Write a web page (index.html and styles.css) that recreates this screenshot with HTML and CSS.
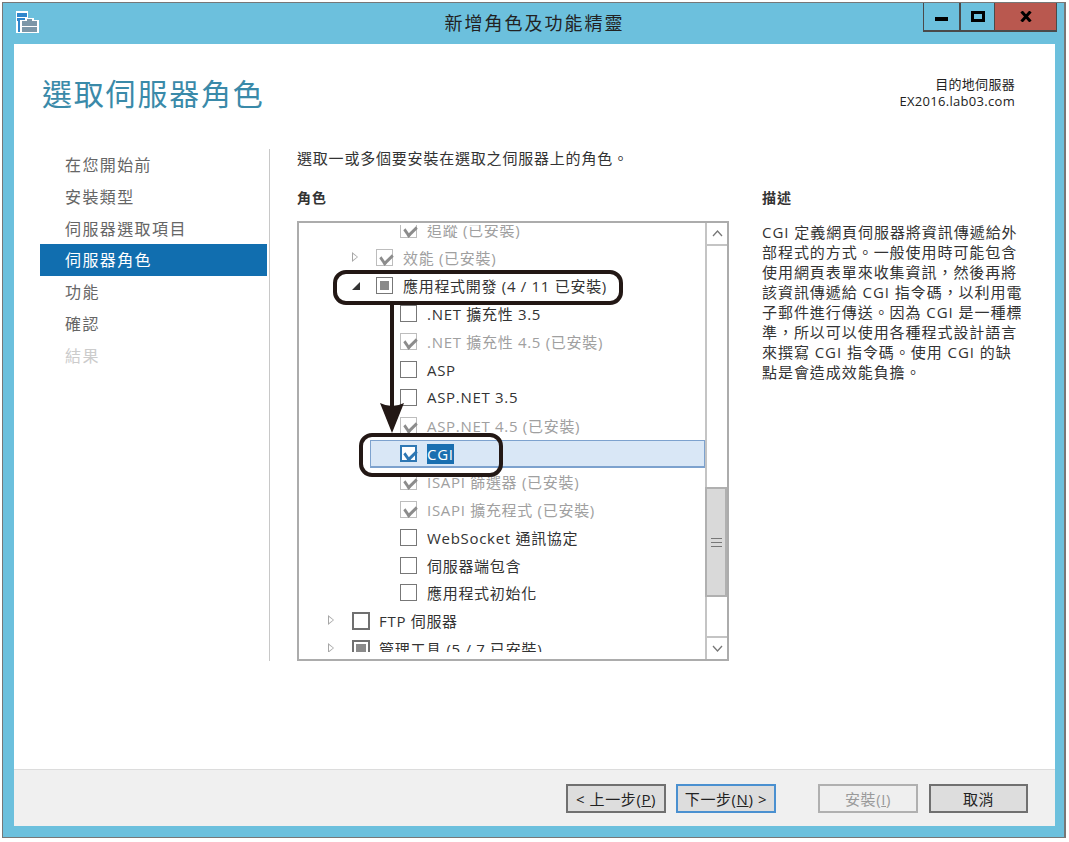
FILE: index.html
```html
<!DOCTYPE html>
<html lang="zh-Hant">
<head>
    <meta charset="UTF-8">
    <title>新增角色及功能精靈</title>
    <link rel="stylesheet" href="styles.css">
</head>
<body>

<div class="window">
    <header class="titlebar">
        <svg class="app-icon" width="23" height="22" viewBox="0 0 23 22">
            <rect x="0" y="0" width="12" height="22" fill="#fff"/>
            <rect x="1" y="2" width="10" height="4" fill="#2f86cc"/>
            <rect x="1" y="7" width="10" height="3" fill="#2f86cc"/>
            <rect x="2" y="10" width="2" height="11" fill="#2f86cc"/>
            <rect x="4" y="9" width="19" height="13" fill="#fff"/>
            <rect x="9" y="7" width="9" height="3" fill="#fff"/>
            <rect x="11" y="8" width="5" height="2" fill="#7d97a8"/>
            <rect x="6" y="10" width="15" height="11" fill="#7d97a8"/>
            <rect x="6" y="15" width="15" height="1" fill="#fff"/>
        </svg>
        <h1 class="window-title">新增角色及功能精靈</h1>
        <div class="controls">
            <button class="ctl ctl-min"><span class="min-glyph"></span></button>
            <button class="ctl ctl-max"><span class="max-glyph"></span></button>
            <button class="ctl ctl-close">
                <svg width="12" height="11" viewBox="0 0 12 11"><path d="M1.5 0.5l9 10M10.5 0.5l-9 10" stroke="#000" stroke-width="3" fill="none"/></svg>
            </button>
        </div>
    </header>

    <div class="page">
        <div class="page-head">
            <h2 class="page-title">選取伺服器角色</h2>
            <div class="target">
                <div>目的地伺服器</div>
                <div>EX2016.lab03.com</div>
            </div>
        </div>

        <div class="page-body">
            <nav class="steps">
                <a>在您開始前</a>
                <a>安裝類型</a>
                <a>伺服器選取項目</a>
                <a class="current">伺服器角色</a>
                <a>功能</a>
                <a>確認</a>
                <a class="off">結果</a>
            </nav>

            <section class="roles">
                <p class="intro">選取一或多個要安裝在選取之伺服器上的角色。</p>
                <h3 class="col-head">角色</h3>
                <div class="listbox">
                    <div class="tree">
                        <div class="tree-inner">
                            <div class="row lvl2 inst"><span class="box done"></span><span class="label">追蹤 (已安裝)</span></div>
                            <div class="row lvl1 inst"><span class="exp closed"></span><span class="box done"></span><span class="label">效能 (已安裝)</span></div>
                            <div class="row lvl1"><span class="exp open"></span><span class="box part"></span><span class="label">應用程式開發 (4 / 11 已安裝)</span></div>
                            <div class="row lvl2"><span class="box"></span><span class="label">.NET 擴充性 3.5</span></div>
                            <div class="row lvl2 inst"><span class="box done"></span><span class="label">.NET 擴充性 4.5 (已安裝)</span></div>
                            <div class="row lvl2"><span class="box"></span><span class="label">ASP</span></div>
                            <div class="row lvl2"><span class="box"></span><span class="label">ASP.NET 3.5</span></div>
                            <div class="row lvl2 inst"><span class="box done"></span><span class="label">ASP.NET 4.5 (已安裝)</span></div>
                            <div class="row lvl2 selected"><span class="box checked"></span><span class="label">CGI</span></div>
                            <div class="row lvl2 inst"><span class="box done"></span><span class="label">ISAPI 篩選器 (已安裝)</span></div>
                            <div class="row lvl2 inst"><span class="box done"></span><span class="label">ISAPI 擴充程式 (已安裝)</span></div>
                            <div class="row lvl2"><span class="box"></span><span class="label">WebSocket 通訊協定</span></div>
                            <div class="row lvl2"><span class="box"></span><span class="label">伺服器端包含</span></div>
                            <div class="row lvl2"><span class="box"></span><span class="label">應用程式初始化</span></div>
                            <div class="row lvl0"><span class="exp closed"></span><span class="box heavy"></span><span class="label">FTP 伺服器</span></div>
                            <div class="row lvl0"><span class="exp closed"></span><span class="box heavy part"></span><span class="label">管理工具 (5 / 7 已安裝)</span></div>
                        </div>
                    </div>
                    <div class="scrollbar">
                        <div class="sb-btn">
                            <svg width="11" height="7" viewBox="0 0 11 7"><path d="M1 6l4.5-5 4.5 5" stroke="#777" stroke-width="1.3" fill="none"/></svg>
                        </div>
                        <div class="sb-track">
                            <div class="sb-thumb"><span class="grip"></span></div>
                        </div>
                        <div class="sb-btn">
                            <svg width="11" height="7" viewBox="0 0 11 7"><path d="M1 1l4.5 5 4.5-5" stroke="#777" stroke-width="1.3" fill="none"/></svg>
                        </div>
                    </div>

                    <!-- callouts drawn over the list -->
                    <div class="callout callout-group"></div>
                    <div class="callout callout-cgi"></div>
                    <svg class="arrow" width="26" height="128" viewBox="0 0 26 128">
                        <rect x="11" y="0" width="4" height="105" fill="#231815"/>
                        <path d="M13 128L1 98Q13 104 25 98z" fill="#231815"/>
                    </svg>
                </div>
            </section>

            <aside class="desc">
                <h3 class="col-head desc-head">描述</h3>
                <div class="desc-text">
                    <div>CGI 定義網頁伺服器將資訊傳遞給外</div>
                    <div>部程式的方式。一般使用時可能包含</div>
                    <div>使用網頁表單來收集資訊，然後再將</div>
                    <div>該資訊傳遞給 CGI 指令碼，以利用電</div>
                    <div>子郵件進行傳送。因為 CGI 是一種標</div>
                    <div>準，所以可以使用各種程式設計語言</div>
                    <div>來撰寫 CGI 指令碼。使用 CGI 的缺</div>
                    <div>點是會造成效能負擔。</div>
                </div>
            </aside>
        </div>
    </div>

    <footer class="actions">
        <button class="btn">&lt; 上一步(<u>P</u>)</button>
        <button class="btn btn-default">下一步(<u>N</u>) &gt;</button>
        <button class="btn btn-off">安裝(<u>I</u>)</button>
        <button class="btn btn-cancel">取消</button>
    </footer>
</div>

</body>
</html>
```

FILE: styles.css
```css
* {
    box-sizing: border-box;
}
body {
    margin: 0;
    background-color: #fff;
    font-family: "Open Sans", "Noto Sans CJK TC", sans-serif;
    color: #333;
}
h1, h2, h3, p {
    margin: 0;
    font-weight: normal;
}
.window {
    margin: 2px 0 0 2px;
    width: 1064px;
    height: 836px;
    border: solid #777;
    border-width: 1px 2px 1px 1px;
    background-color: #6cc0dd;
    padding: 0 9px 11px 11px;
    display: flex;
    flex-direction: column;
}
.titlebar {
    height: 41px;
    flex: none;
    display: flex;
    position: relative;
    justify-content: center;
}
.app-icon {
    position: absolute;
    left: 2px;
    top: 8px;
}
.window-title {
    font-size: 18px;
    letter-spacing: 2px;
    line-height: 41px;
    color: #222;
}
.controls {
    position: absolute;
    top: 0;
    right: -2px;
    display: flex;
    height: 29px;
    border: solid #4a4a4a;
    border-width: 0 1px 2px 1px;
}
.ctl {
    margin: 0;
    padding: 0;
    border: 0;
    background-color: #6cc0dd;
    height: 27px;
    display: flex;
    align-items: center;
    justify-content: center;
}
.ctl-min {
    width: 37px;
    border-right: 2px solid #4a4a4a;
}
.ctl-max {
    width: 34px;
    border-right: 1px solid #4a4a4a;
}
.ctl-close {
    width: 61px;
    background-color: #b9584f;
}
.min-glyph {
    width: 13px;
    height: 4px;
    background-color: #000;
    margin-top: 5px;
}
.max-glyph {
    width: 14px;
    height: 11px;
    border: 3px solid #000;
}
.page {
    flex: 1;
    background-color: #fff;
    display: flex;
    flex-direction: column;
}
.page-head {
    height: 105px;
    flex: none;
    padding: 0 40px 0 28px;
    display: flex;
    justify-content: space-between;
}
.page-title {
    font-size: 30px;
    letter-spacing: 1.8px;
    line-height: 44px;
    margin-top: 28px;
    color: #3a8aa9;
}
.target {
    margin-top: 32px;
    font-size: 13px;
    letter-spacing: 0.3px;
    line-height: 17px;
    text-align: right;
    color: #222;
}
.page-body {
    display: flex;
    padding-left: 26px;
    height: 512px;
}
.steps {
    width: 230px;
    flex: none;
    border-right: 1px solid #c8c8c8;
    padding-right: 2px;
    display: flex;
    flex-direction: column;
}
.steps a {
    height: 31.8px;
    line-height: 32px;
    padding-left: 25px;
    font-size: 16px;
    letter-spacing: 1.4px;
    color: #666;
}
.steps a.current {
    background-color: #116eaf;
    color: #fff;
}
.steps a.off {
    color: #ccc;
}
.roles {
    width: 432px;
    flex: none;
    margin-left: 27px;
}
.intro {
    font-size: 15px;
    letter-spacing: 0.8px;
    line-height: 20px;
    margin-top: -1px;
    color: #333;
}
.col-head {
    font-size: 14px;
    font-weight: bold;
    letter-spacing: 1px;
    line-height: 20px;
    margin-top: 20px;
    color: #333;
}
.listbox {
    position: relative;
    display: flex;
    height: 440px;
    margin-top: 13px;
    border: 2px solid #acacac;
}
.tree {
    flex: 1;
    height: 427px;
    margin-top: 2px;
    overflow: hidden;
}
.tree-inner {
    margin-top: -9px;
}
.row {
    height: 27.93px;
    display: flex;
    align-items: center;
    font-size: 15px;
    letter-spacing: 0.7px;
    white-space: nowrap;
    color: #333;
}
.lvl0 {
    padding-left: 29px;
}
.lvl1 {
    padding-left: 53px;
}
.lvl2 {
    padding-left: 101px;
}
.inst {
    color: #a0a0a0;
}
.exp {
    width: 24px;
    flex: none;
    display: block;
    height: 11px;
    position: relative;
}
.exp.closed::before {
    content: "";
    display: block;
    width: 0;
    height: 0;
    border: 5.5px solid transparent;
    border-left: 6.5px solid #a6a6a6;
    border-right: 0;
}
.exp.closed::after {
    content: "";
    position: absolute;
    left: 1px;
    top: 2px;
    border: 3.5px solid transparent;
    border-left: 4px solid #fff;
    border-right: 0;
}
.exp.open::before {
    content: "";
    display: block;
    width: 0;
    height: 0;
    margin-top: 2px;
    border-bottom: 8px solid #333;
    border-left: 8px solid transparent;
}
.box {
    width: 17px;
    height: 17px;
    flex: none;
    border: 1px solid #777;
    background-color: #fff;
    position: relative;
}
.box.heavy {
    width: 18px;
    height: 18px;
    border: 2px solid #707070;
}
.box.done {
    border-color: #bdbdbd;
}
.box.done::after, .box.checked::after {
    content: "";
    position: absolute;
    left: 3px;
    top: 0;
    width: 10px;
    height: 6px;
    transform: translateY(3px) rotate(-45deg) skewX(-10deg);
    border: solid #8c8c8c;
    border-width: 0 0 3px 3px;
}
.box.checked {
    border: 2px solid #2f78b4;
}
.box.checked::after {
    left: 2px;
    top: -1px;
    border-color: #2f78b4;
}
.box.part::after {
    content: "";
    position: absolute;
    left: 3px;
    top: 3px;
    right: 3px;
    bottom: 3px;
    background-color: #8a8a8a;
}
.box.heavy.part::after {
    left: 2px;
    top: 2px;
    right: 2px;
    bottom: 2px;
}
.label {
    margin-left: 10px;
}
.box.heavy + .label {
    margin-left: 9px;
}
.row.selected {
    margin: 1px 0 -1px 71px;
    padding-left: 29px;
    background-color: #d9e7f6;
    border: 1px solid #7da2ce;
    border-width: 1px 1px 2px 1px;
}
.row.selected .label {
    background-color: #1a6fb0;
    color: #fff;
    line-height: 20px;
}
.scrollbar {
    width: 22px;
    flex: none;
    border-left: 2px solid #c4c4c4;
    display: flex;
    flex-direction: column;
}
.sb-btn {
    height: 21px;
    flex: none;
    display: flex;
    align-items: center;
    justify-content: center;
}
.sb-track {
    flex: 1;
    border-top: 2px solid #c4c4c4;
    border-bottom: 2px solid #c4c4c4;
    padding-top: 241px;
}
.sb-thumb {
    height: 110px;
    margin-left: -2px;
    background-color: #d9d9d9;
    border: 2px solid #b0b0b0;
    display: flex;
    align-items: center;
    justify-content: center;
}
.grip {
    width: 11px;
    height: 9px;
    border-top: 1px solid #777;
    border-bottom: 1px solid #777;
    background: linear-gradient(#777, #777) center / 100% 1px no-repeat;
}
.callout {
    position: absolute;
    border: 4px solid #231815;
    border-radius: 13px;
}
.callout-group {
    left: 34px;
    top: 47px;
    width: 290px;
    height: 35px;
}
.callout-cgi {
    left: 60px;
    top: 210px;
    width: 144px;
    height: 44px;
}
.arrow {
    position: absolute;
    left: 80px;
    top: 82px;
}
.desc {
    width: 260px;
    flex: none;
    margin-left: 33px;
}
.desc-head {
    margin-top: 39px;
}
.desc-text {
    margin-top: 14px;
    font-size: 15px;
    letter-spacing: 0.95px;
    line-height: 20px;
    white-space: nowrap;
    color: #333;
}
.actions {
    height: 57px;
    flex: none;
    background-color: #f0f0f0;
    border-top: 1px solid #dcdcdc;
    padding: 14px 27px 0 0;
    display: flex;
    justify-content: flex-end;
    align-items: flex-start;
}
.btn {
    width: 100px;
    height: 29px;
    margin: 0 0 0 10px;
    padding: 0;
    border: 2px solid #707070;
    background-color: #dddddd;
    font-family: inherit;
    font-size: 15px;
    letter-spacing: 0.6px;
    color: #222;
}
.btn-default {
    border-color: #4a90d0;
}
.btn-off {
    margin-left: 42px;
    background-color: #efefef;
    border-color: #b0b0b0;
    color: #9a9a9a;
}
.btn-cancel {
    width: 99px;
    margin-left: 11px;
}
```
